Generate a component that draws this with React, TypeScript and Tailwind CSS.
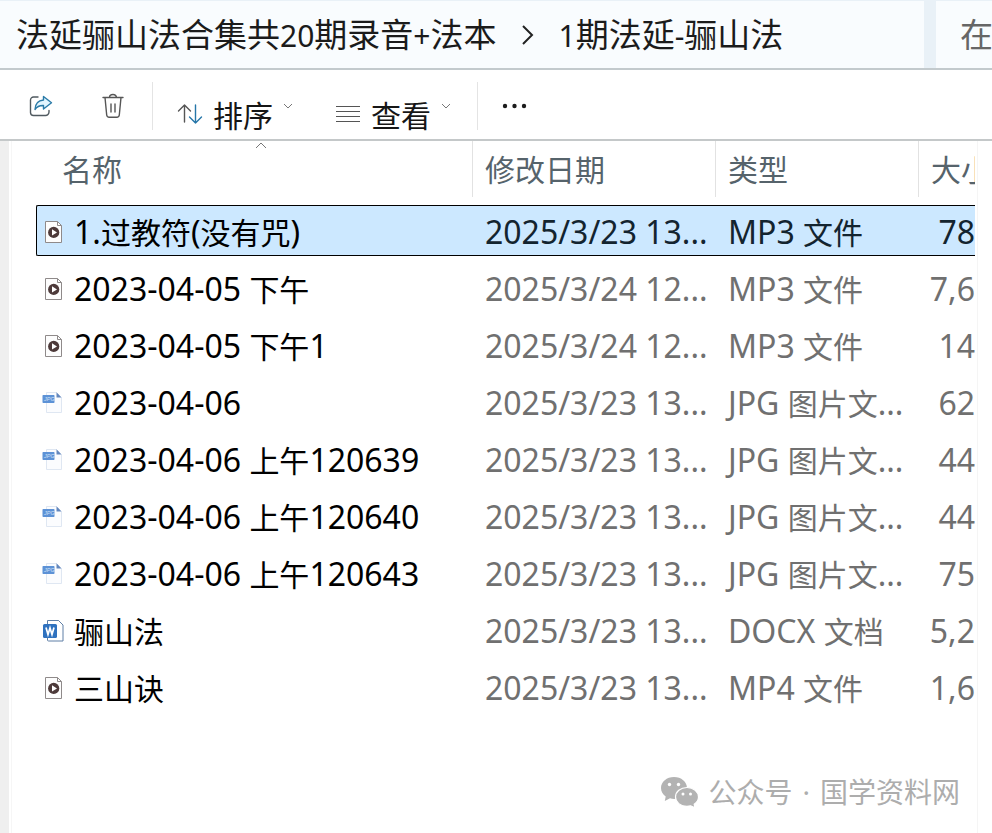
import clsx from "clsx";

type FileKind = "media" | "jpg" | "docx";

interface FileItem {
  name: string;
  kind: FileKind;
  date: string;
  type: string;
  size: string;
  selected?: boolean;
}

const files: FileItem[] = [
  { name: "1.过教符(没有咒)", kind: "media", date: "2025/3/23 13...", type: "MP3 文件", size: "78", selected: true },
  { name: "2023-04-05 下午", kind: "media", date: "2025/3/24 12...", type: "MP3 文件", size: "7,6" },
  { name: "2023-04-05 下午1", kind: "media", date: "2025/3/24 12...", type: "MP3 文件", size: "14" },
  { name: "2023-04-06", kind: "jpg", date: "2025/3/23 13...", type: "JPG 图片文...", size: "62" },
  { name: "2023-04-06 上午120639", kind: "jpg", date: "2025/3/23 13...", type: "JPG 图片文...", size: "44" },
  { name: "2023-04-06 上午120640", kind: "jpg", date: "2025/3/23 13...", type: "JPG 图片文...", size: "44" },
  { name: "2023-04-06 上午120643", kind: "jpg", date: "2025/3/23 13...", type: "JPG 图片文...", size: "75" },
  { name: "骊山法", kind: "docx", date: "2025/3/23 13...", type: "DOCX 文档", size: "5,2" },
  { name: "三山诀", kind: "media", date: "2025/3/23 13...", type: "MP4 文件", size: "1,6" },
];

// Chinese runs get their own size next to Latin text
function Mixed({ text, cjk }: { text: string; cjk: string }) {
  return (
    <>
      {text.split(/([\u4e00-\u9fff]+)/).map((part, i) =>
        i % 2 ? (
          <span key={i} className={cjk}>
            {part}
          </span>
        ) : (
          part
        )
      )}
    </>
  );
}

function MediaIcon() {
  return (
    <svg width="22" height="24" viewBox="0 0 22 24" fill="none">
      <path d="M3.5 1.5h12l4 4v17h-16z" fill="#fdfdfd" stroke="#8f8a8a" />
      <path d="M15.5 1.5v4h4" stroke="#8f8a8a" />
      <circle cx="11.7" cy="12.4" r="5.6" fill="#4d3a3a" />
      <path d="M10 9.3v6.2l5-3.1z" fill="#fff" />
    </svg>
  );
}

function JpgIcon() {
  return (
    <svg width="22" height="24" viewBox="0 0 22 24" fill="none">
      <path d="M4.5 1.5h10l5 5v15h-15z" fill="#fbfcfe" stroke="#dfe7f2" />
      <path d="M14.5 1.2l5 5.3h-5z" fill="#6487bd" />
      <rect x="0.5" y="4" width="12" height="8" rx="0.8" fill="#5d92d6" />
      <text x="2" y="10.4" fontSize="5.5" fontFamily="Liberation Sans, sans-serif" fontStyle="italic" fill="#cfe0f6">
        JPG
      </text>
    </svg>
  );
}

function WordIcon() {
  return (
    <svg width="22" height="24" viewBox="0 0 22 24" fill="none">
      <path d="M5.5 1.5h11l4.5 4.5v16h-14.5a1 1 0 0 1-1-1z" fill="#fff" stroke="#5f7fa6" />
      <path d="M16.5 1.5l4.5 4.5" stroke="#5f7fa6" />
      <rect x="1" y="5" width="14" height="14" rx="1.5" fill="#2f72bf" />
      <path d="M4 8.5l2 7 2-6.5 2 6.5 2-7" stroke="#fff" strokeWidth="1.7" />
    </svg>
  );
}

function FileIcon({ kind }: { kind: FileKind }) {
  if (kind === "jpg") return <JpgIcon />;
  if (kind === "docx") return <WordIcon />;
  return <MediaIcon />;
}

function ShareIcon() {
  return (
    <svg width="24" height="24" viewBox="0 0 24 24" fill="none" strokeWidth="1.4" strokeLinejoin="round" strokeLinecap="round">
      <path d="M9 3H4.500a3 3 0 0 0-3 3V18.500a3 3 0 0 0 3 3H16.500A3.500 3.500 0 0 0 20 18v-1.500" stroke="#505a60" />
      <path d="M14.500 2.500l8 6.300-8 6.200v-3.500c-4-.2-6.500 1-8.500 4 .2-5.500 3.500-9 8.500-9.500z" fill="#e2f5ff" stroke="#2b7ba8" />
    </svg>
  );
}

function TrashIcon() {
  return (
    <svg width="22" height="26" viewBox="0 0 22 26" fill="none" stroke="#565656" strokeWidth="1.4" strokeLinecap="round" strokeLinejoin="round">
      <path d="M1 4.500h20M7.500 4.500a3.500 3 0 0 1 7 0M3 4.500l1.700 17.500a2.500 2.500 0 0 0 2.500 2.200h7.600a2.500 2.500 0 0 0 2.500-2.200L19 4.500M9 11v8M13 11v8" />
    </svg>
  );
}

function SortIcon() {
  return (
    <svg width="26" height="22" viewBox="0 0 26 22" fill="none" strokeWidth="1.4" strokeLinecap="round" strokeLinejoin="round">
      <path d="M7.500 19V2M1.500 8l6-6 6 6" stroke="#555" />
      <path d="M18.500 2v18M12.500 14l6 6 6-6" stroke="#2576a8" />
    </svg>
  );
}

function SmallChevron() {
  return (
    <svg width="10" height="6" viewBox="0 0 10 6" fill="none" stroke="#777" className="mb-4">
      <path d="M1 1l4 4 4-4" />
    </svg>
  );
}

function WeChatIcon() {
  return (
    <svg width="40" height="32" viewBox="0 0 40 32" fill="#b3b3b3">
      <path d="M14 1C6.800 1 1 5.800 1 12c0 3.500 1.800 6.400 4.700 8.400L4.800 25l5.200-2.700c1.300.4 2.700.6 4.200.6 7.200 0 12.800-4.700 12.800-10.900S21.200 1 14 1z" />
      <path d="M27 11.500c-6.500 0-11.500 4.200-11.500 9.500S20.500 30.300 27 30.300c1.300 0 2.500-.2 3.700-.5l4.300 2-.8-3.600c2.600-1.700 4.300-4.200 4.300-7.200 0-5.300-5-9.500-11.500-9.500z" stroke="#fff" strokeWidth="1.2" />
      <g fill="#fff">
        <circle cx="9.500" cy="8.500" r="1.700" />
        <circle cx="18.500" cy="8.500" r="1.700" />
        <circle cx="23" cy="18" r="1.500" />
        <circle cx="30.500" cy="18" r="1.500" />
      </g>
    </svg>
  );
}

const headers = ["名称", "修改日期", "类型", "大小"];

export default function App() {
  return (
    <div className="relative flex min-h-screen flex-col overflow-hidden bg-white font-['Noto_Sans','Noto_Sans_CJK_SC',sans-serif] text-black">
      <header className="flex h-[70px] gap-3 border-b-2 border-[#c3cacd] bg-[#e9f1f7] pt-px">
        <nav className="flex h-full flex-1 items-center whitespace-nowrap bg-[#f9fcfe] pl-4 text-[30px] text-[#1b1b1b]">
          <a href="#root-folder">
            <Mixed text="法延骊山法合集共20期录音+法本" cjk="text-[33px]" />
          </a>
          <svg width="14" height="22" viewBox="0 0 14 22" fill="none" stroke="#222" strokeWidth="2" className="mx-6">
            <path d="M2 2l9 9-9 9" />
          </svg>
          <a href="#current-folder">
            <Mixed text="1期法延-骊山法" cjk="text-[33px]" />
          </a>
        </nav>
        <button className="flex w-14 items-center overflow-hidden whitespace-nowrap bg-[#f9fcfe] pl-6 text-[33px] text-[#666]">在</button>
      </header>

      <div className="flex h-[71px] items-center border-b-2 border-[#c4c8c9] pt-0.5 text-[30px] text-[#161616]">
        <button className="ml-[29px]" aria-label="共享">
          <ShareIcon />
        </button>
        <button className="ml-[49px]" aria-label="删除">
          <TrashIcon />
        </button>
        <div className="ml-7 h-12 w-px bg-[#e4e4e4]" />
        <button className="mt-4 ml-6 flex items-center">
          <SortIcon />
          <span className="mt-1 mr-2.5 ml-2.5">排序</span>
          <SmallChevron />
        </button>
        <button className="mt-4 ml-[42px] flex items-center">
          <svg width="26" height="18" viewBox="0 0 26 18" stroke="#555">
            <path d="M1 1.500h24M1 6.500h24M1 11.500h24M1 16.500h24" />
          </svg>
          <span className="mt-1 mr-2.5 ml-2.5">查看</span>
          <SmallChevron />
        </button>
        <div className="ml-[26px] h-12 w-px bg-[#e4e4e4]" />
        <button className="ml-6" aria-label="更多">
          <svg width="26" height="6" viewBox="0 0 26 6" fill="#1c1c1c">
            <circle cx="3" cy="3" r="2.200" />
            <circle cx="12.500" cy="3" r="2.200" />
            <circle cx="22" cy="3" r="2.200" />
          </svg>
        </button>
      </div>

      <main className="flex flex-1">
        <div className="w-[9px] bg-[#efefef]" />
        <div className="ml-0.5 w-px bg-[#f6f6f6]" />
        <div className="min-w-0 flex-1 pl-6">
          <table className="-mt-1.5 w-full table-fixed border-separate border-spacing-x-0 border-spacing-y-1.5 text-[32px] leading-none whitespace-nowrap">
            <colgroup>
              <col />
              <col className="w-[243px]" />
              <col className="w-[203px]" />
              <col className="w-14" />
            </colgroup>
            <thead>
              <tr>
                {headers.map((label, i) => (
                  <th key={label} className="relative h-[58px] overflow-hidden p-0 text-left align-top text-[30px] font-normal text-[#56636b]">
                    <div
                      className={clsx(
                        "flex h-[56px] items-center pt-0.5",
                        i === 0 ? "pl-[26px]" : "pl-3",
                        i < 3 && "border-r border-[#e2e2e2]"
                      )}
                    >
                      {label}
                    </div>
                    {i === 0 && (
                      <svg width="12" height="7" viewBox="0 0 12 7" fill="none" stroke="#777" className="absolute top-px left-1/2">
                        <path d="M1 6l5-5 5 5" />
                      </svg>
                    )}
                  </th>
                ))}
              </tr>
            </thead>
            <tbody>
              {files.map((f) => {
                const cell = clsx(
                  "h-[51px] overflow-hidden border-y px-0 pt-0.5 pb-0",
                  f.selected ? "border-black bg-[#cce8ff] text-[#13242f]" : "border-transparent text-[#707070]"
                );
                return (
                  <tr key={f.name}>
                    <td className={clsx(cell, "rounded-l-xs border-l")}>
                      <div className="flex items-center pl-[5px] text-black">
                        <FileIcon kind={f.kind} />
                        <span className="ml-2.5">
                          <Mixed text={f.name} cjk="text-[30px]" />
                        </span>
                      </div>
                    </td>
                    <td className={cell}>
                      <div className="pl-3">{f.date}</div>
                    </td>
                    <td className={cell}>
                      <div className="pl-3">
                        <Mixed text={f.type} cjk="text-[30px]" />
                      </div>
                    </td>
                    <td className={clsx(cell, "text-right")}>{f.size}</td>
                  </tr>
                );
              })}
            </tbody>
          </table>
        </div>
        <div className="ml-0.5 w-[15px] border-l border-[#f5f5f5]" />
      </main>

      <div className="absolute right-8 bottom-5 flex items-center gap-2 text-[28px] text-[#adadad]">
        <WeChatIcon />
        <div className="flex gap-2.5">
          <span>公众号</span>
          <span>·</span>
          <span>国学资料网</span>
        </div>
      </div>
    </div>
  );
}
